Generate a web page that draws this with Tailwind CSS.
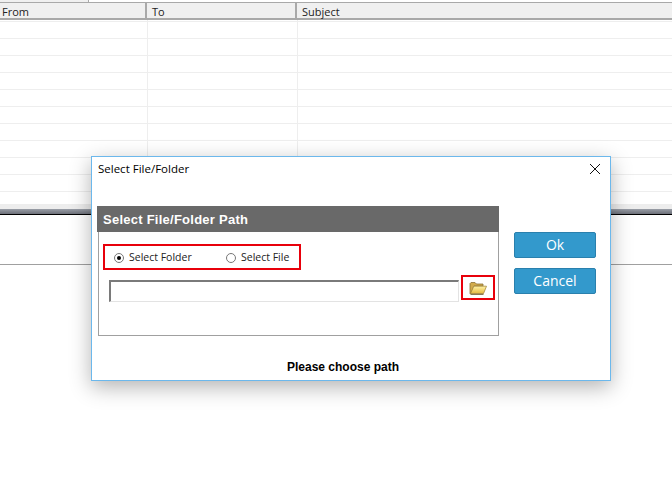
<!DOCTYPE html>
<html lang="en">
<head>
  <meta charset="UTF-8">
  <title>Select File/Folder</title>
  <script src="https://cdn.jsdelivr.net/npm/@tailwindcss/browser@4"></script>
</head>
<body class="bg-white w-[672px] h-[495px] overflow-hidden relative font-['Open_Sans',sans-serif] text-[11px] text-black">
  <!-- mail list behind the dialog -->
  <div class="flex h-[3px] border-b-[1px] border-[#a9a9a9]">
    <div class="w-[89px] bg-[#f0f0f0] border-r border-[#a9a9a9]"></div>
  </div>
  <div class="flex h-[17px] bg-[#f0f0f0] border-b-2 border-[#a9a9a9] leading-[18px] text-[#222]">
    <div class="w-[147px] pl-[2px] border-r-2 border-[#a9a9a9]">From</div>
    <div class="w-[150px] pl-[5px] border-r-2 border-[#a9a9a9]">To</div>
    <div class="flex-1 pl-[5px]">Subject</div>
  </div>
  <div class="h-[2px] border-b border-[#eeeeee]"></div>
  <div class="h-[17px] border-b border-[#eeeeee]"></div>
  <div class="h-[17px] border-b border-[#eeeeee]"></div>
  <div class="h-[17px] border-b border-[#eeeeee]"></div>
  <div class="h-[17px] border-b border-[#eeeeee]"></div>
  <div class="h-[17px] border-b border-[#eeeeee]"></div>
  <div class="h-[17px] border-b border-[#eeeeee]"></div>
  <div class="h-[17px] border-b border-[#eeeeee]"></div>
  <div class="h-[17px] border-b border-[#eeeeee]"></div>
  <div class="h-[17px] border-b border-[#eeeeee]"></div>
  <div class="h-[17px] border-b border-[#eeeeee]"></div>
  <div class="h-[12px]"></div>
  <div class="h-[5px] bg-[#ededed]"></div>
  <div class="h-[5px] bg-gradient-to-b from-[#9a9fa8] to-[#6d7079]"></div>
  <div class="h-[1px] bg-black"></div>
  <div class="h-[50px] border-b border-[#a0a0a0]"></div>

  <!-- column rules in the list -->
  <div class="absolute left-[147px] top-[20px] h-[184px] w-px bg-[#eeeeee]"></div>
  <div class="absolute left-[297px] top-[20px] h-[184px] w-px bg-[#eeeeee]"></div>

  <!-- dialog -->
  <div class="absolute left-[91px] top-[156px] w-[520px] h-[225px] bg-white border border-[#6cb8ec] shadow-[0_6px_20px_rgba(0,0,0,0.3)] flex flex-col">
    <div class="flex justify-between items-center h-[26px] pl-[6px] pr-[9px] pb-[2px] text-[11.500px]">
      <span>Select File/Folder</span>
      <svg width="12" height="12" viewBox="0 0 12 12" fill="none" stroke="#111" stroke-width="1"><path d="M1 1 L11 11 M11 1 L1 11"/></svg>
    </div>
    <div class="flex flex-1 pt-[23px] pl-[5px]">
      <div class="w-[402px]">
        <div class="h-[26px] bg-[#696969] text-white font-['Liberation_Sans',sans-serif] font-bold text-[13px] leading-[27px] pl-[6px] tracking-[0.25px]">Select File/Folder Path</div>
        <div class="ml-[1px] h-[104px] border border-t-0 border-[#a0a0a0] pt-[12px] pl-[4px]">
          <div class="w-[198px] h-[26px] border-2 border-[#e8000b] flex items-center pl-[9px] pt-[1px] text-[#222] text-[10.500px]">
            <span class="w-[10px] h-[10px] rounded-full border border-[#777] flex items-center justify-center"><span class="w-[4px] h-[4px] rounded-full bg-black"></span></span>
            <span class="ml-[5px] w-[97px]">Select Folder</span>
            <span class="w-[10px] h-[10px] rounded-full border border-[#777]"></span>
            <span class="ml-[5px]">Select File</span>
          </div>
          <div class="flex mt-[5px] pl-[6px]">
            <div class="w-[350px] h-[22px] mt-[5px] border-2 border-r border-b border-t-[#7a7a7a] border-l-[#7a7a7a] border-r-[#e3e3e3] border-b-[#e3e3e3]"></div>
            <div class="w-[34px] h-[25px] ml-[2px] border-2 border-[#e8000b] flex items-center justify-center">
              <svg width="18" height="14" viewBox="0 0 18 14">
                <defs>
                  <linearGradient id="folderFront" x1="0" y1="0" x2="0" y2="1">
                    <stop offset="0" stop-color="#fff3a8"/>
                    <stop offset="1" stop-color="#e5b93f"/>
                  </linearGradient>
                </defs>
                <path d="M1 12.5 V2.5 L2 1.5 H6 L7.500 3 H14 V5 H5 L1.500 13 Z" fill="#d2ab4c" stroke="#8a7136" stroke-width="0.8"/>
                <path d="M4.800 5.200 H17.500 L14.500 12.600 H1.500 Z" fill="url(#folderFront)" stroke="#a68a3e" stroke-width="0.8"/>
                <path d="M1.500 13.300 H14.500" stroke="#6d5a2c" stroke-width="1"/>
              </svg>
            </div>
          </div>
        </div>
      </div>
      <div class="ml-[15px] w-[82px] pt-[26px] flex flex-col gap-[10px] text-white text-[14px]">
        <div class="h-[26px] pb-[2px] bg-[#3399cc] border border-[#2a80ad] rounded-[2px] flex items-center justify-center">Ok</div>
        <div class="h-[26px] pb-[2px] bg-[#3399cc] border border-[#2a80ad] rounded-[2px] flex items-center justify-center">Cancel</div>
      </div>
    </div>
    <div class="text-center font-['Liberation_Sans',sans-serif] font-bold text-[12px] h-[21px] pr-[16px] pt-[1px] leading-[14px]">Please choose path</div>
  </div>
</body>
</html>
